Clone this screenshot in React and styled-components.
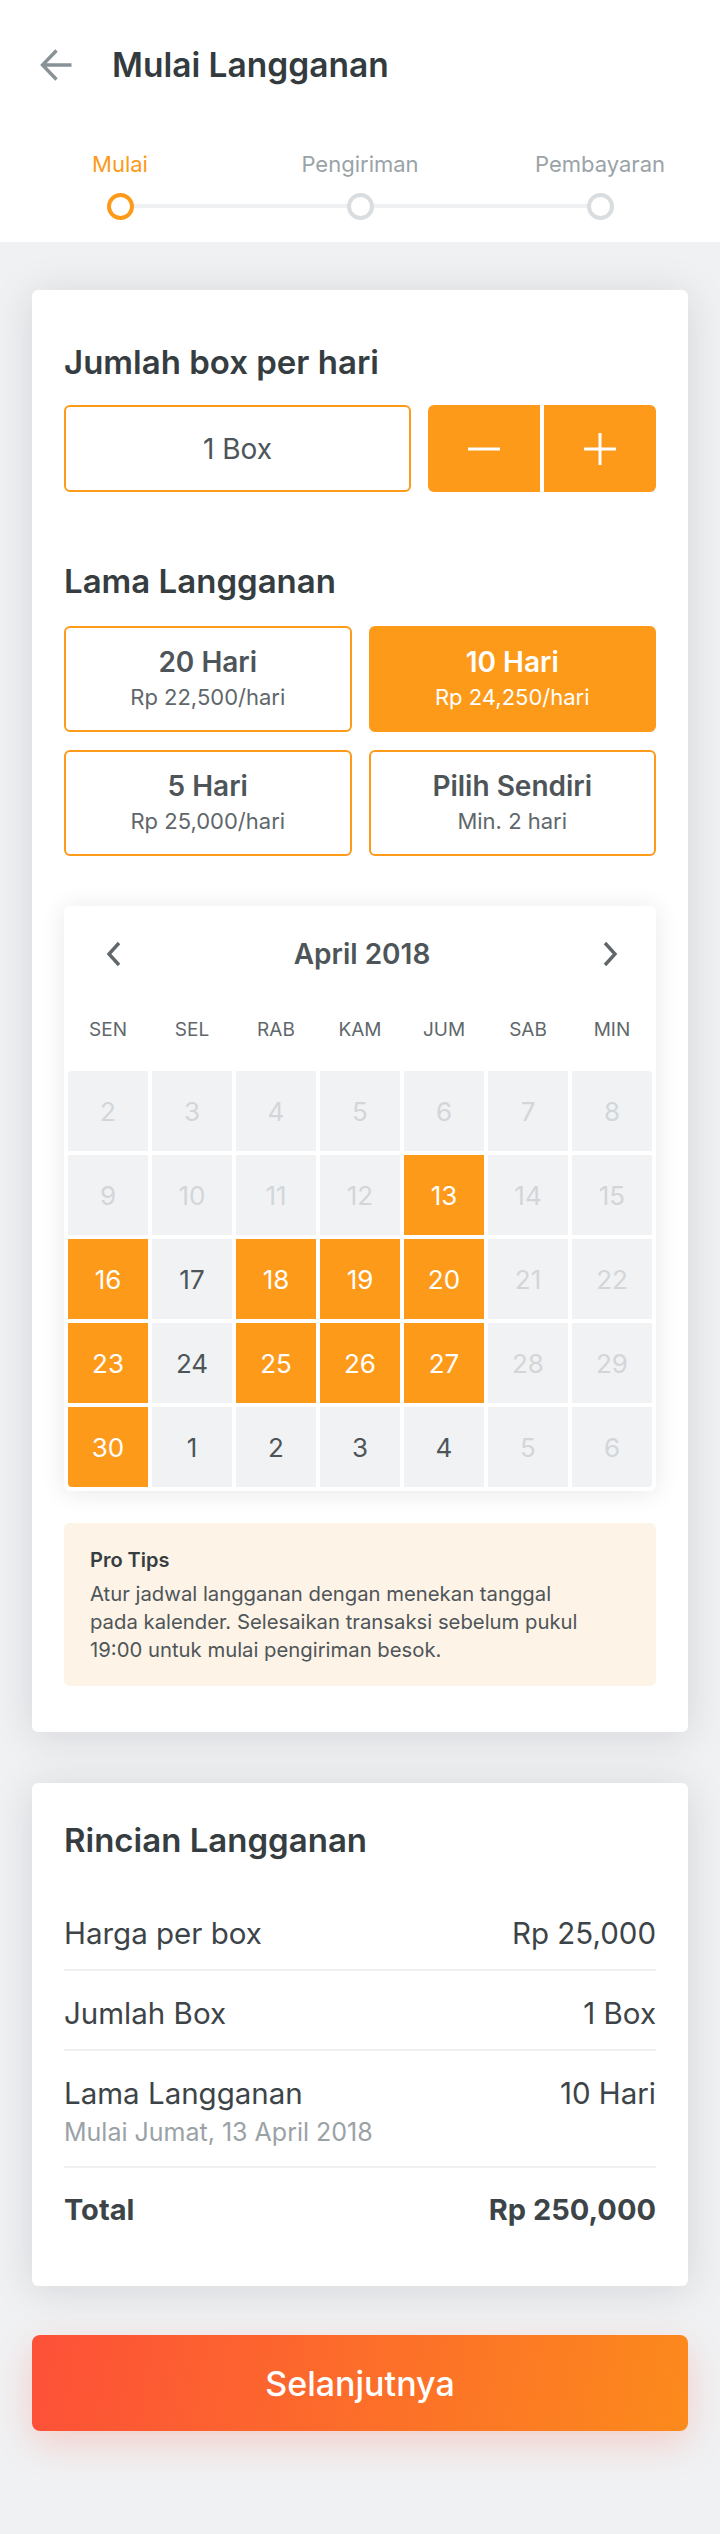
import React from 'react'
import styled, { createGlobalStyle } from 'styled-components'

const ORANGE = '#fd9a1a'

const GlobalStyle = createGlobalStyle`
    body {
        margin: 0;
        background: #f0f1f3;
        font-family: Inter, "Noto Sans", sans-serif;
    }
`

const Page = styled.div`
    width: 720px;
    min-height: 2534px;
    background: #f0f1f3;
`

const Header = styled.header`
    background: #fff;
`

const TopBar = styled.div`
    height: 130px;
    display: flex;
    align-items: center;
    gap: 40px;
    padding-left: 40px;
`

const Title = styled.h1`
    margin: 0;
    font-size: 33.5px;
    line-height: 40px;
    font-weight: 600;
    color: #333b3f;
`

const Steps = styled.div`
    display: grid;
    grid-template-columns: repeat(3, 1fr);
    padding: 20px 0 22px;
`

const Step = styled.div`
    display: flex;
    flex-direction: column;
    align-items: center;
    gap: 14px;
`

const StepLabel = styled.span`
    font-size: 22px;
    line-height: 28px;
    color: ${p => (p.$active ? ORANGE : '#9aa3a7')};
`

const DotRow = styled.div`
    width: 100%;
    height: 28px;
    display: flex;
    align-items: center;
`

const Track = styled.div`
    flex: 1;
    height: 4px;
    background: ${p => (p.$hidden ? 'transparent' : '#eef0f2')};
`

const Dot = styled.div`
    width: 27px;
    height: 27px;
    box-sizing: border-box;
    border-radius: 50%;
    background: #fff;
    border: 4px solid ${p => (p.$active ? ORANGE : '#dadddf')};
`

const Main = styled.main`
    padding: 48px 32px 0;
    display: flex;
    flex-direction: column;
`

const Card = styled.section`
    background: #fff;
    border-radius: 6px;
    box-shadow: 0 4px 40px rgba(20, 30, 40, 0.13);
    padding: ${p => p.$pad};
    & + & {
        margin-top: 51px;
    }
`

const SectionTitle = styled.h2`
    margin: ${p => p.$mt || 0}px 0 0;
    font-size: 33px;
    line-height: 40px;
    font-weight: 600;
    color: #363d41;
`

const Stepper = styled.div`
    display: flex;
    gap: 17px;
    margin-top: 23px;
    height: 87px;
`

const QtyBox = styled.div`
    width: 347px;
    box-sizing: border-box;
    border: 2px solid ${ORANGE};
    border-radius: 6px;
    display: flex;
    align-items: center;
    justify-content: center;
    font-size: 28px;
    color: #4d5559;
`

const QtyButtons = styled.div`
    flex: 1;
    display: flex;
    gap: 4px;
`

const QtyButton = styled.button`
    flex: 1;
    border: none;
    padding: 0;
    background: ${ORANGE};
    display: flex;
    align-items: center;
    justify-content: center;
    border-radius: ${p => (p.$side === 'left' ? '6px 0 0 6px' : '0 6px 6px 0')};
`

const OptionGrid = styled.div`
    display: grid;
    grid-template-columns: 1fr 1fr;
    gap: 18px 17px;
    margin-top: 25px;
`

const Option = styled.div`
    height: 106px;
    box-sizing: border-box;
    border: 2px solid ${ORANGE};
    border-radius: 6px;
    background: ${p => (p.$active ? ORANGE : '#fff')};
    display: flex;
    flex-direction: column;
    align-items: center;
    justify-content: center;
    gap: 4px;
`

const OptionTitle = styled.div`
    font-size: 28px;
    line-height: 32px;
    font-weight: 600;
    color: ${p => (p.$active ? '#fff' : '#4d5559')};
`

const OptionSub = styled.div`
    font-size: 22px;
    line-height: 30px;
    color: ${p => (p.$active ? '#fff' : '#5f676b')};
`

const Calendar = styled.div`
    margin-top: 50px;
    background: #fff;
    border-radius: 6px;
    box-shadow: 0 2px 24px rgba(20, 30, 40, 0.1);
    padding: 4px;
`

const CalHeader = styled.div`
    height: 88px;
    display: flex;
    align-items: center;
    justify-content: space-between;
    padding: 0 34px 0 38px;
`

const MonthLabel = styled.div`
    font-size: 28px;
    line-height: 34px;
    font-weight: 600;
    color: #4d5559;
`

const WeekGrid = styled.div`
    display: grid;
    grid-template-columns: repeat(7, 1fr);
    gap: 4px;
`

const DayNames = styled(WeekGrid)`
    height: 62px;
    align-items: center;
`

const DayName = styled.div`
    text-align: center;
    font-size: 19px;
    color: #5f676b;
`

const DayGrid = styled(WeekGrid)`
    margin-top: 11px;
    border-radius: 4px;
    overflow: hidden;
`

const dayBg = { selected: ORANGE, normal: '#f1f2f4', disabled: '#f1f2f4' }
const dayColor = { selected: '#fff', normal: '#4d5559', disabled: '#d3d6d9' }

const Day = styled.div`
    height: 80px;
    display: flex;
    align-items: center;
    justify-content: center;
    font-size: 26px;
    background: ${p => dayBg[p.$kind]};
    color: ${p => dayColor[p.$kind]};
`

const Tips = styled.div`
    margin-top: 32px;
    background: #fdf3e6;
    border-radius: 6px;
    padding: 23px 26px 22px;
`

const TipTitle = styled.div`
    font-size: 20px;
    line-height: 28px;
    font-weight: 600;
    color: #363d41;
`

const TipText = styled.p`
    margin: 6px 0 0;
    font-size: 20.3px;
    line-height: 28px;
    color: #4d5559;
`

const Details = styled.div`
    margin-top: 31px;
`

const DetailRow = styled.div`
    display: flex;
    justify-content: space-between;
    align-items: flex-start;
    padding: 24px 0 18px;
    border-bottom: 2px solid ${p => (p.$last ? 'transparent' : '#eef0f2')};
    font-size: ${p => (p.$bold ? 29 : 29.5)}px;
    line-height: 36px;
    font-weight: ${p => (p.$bold ? 700 : 400)};
    color: #3d4448;
`

const DetailSub = styled.div`
    margin-top: 5px;
    font-size: 25px;
    line-height: 32px;
    font-weight: 400;
    color: #9aa2a6;
`

const NextButton = styled.button`
    margin-top: 49px;
    height: 96px;
    border: none;
    border-radius: 8px;
    background: linear-gradient(100deg, #fd5038 0%, #fc8a1c 100%);
    box-shadow: 0 12px 36px rgba(253, 80, 56, 0.22);
    color: #fff;
    font-family: inherit;
    font-size: 34px;
    font-weight: 500;
`

const BackIcon = () => (
    <svg width="32" height="32" viewBox="0 0 32 32" fill="none" stroke="#899297" strokeWidth="3.4">
        <path d="M2.5 16H31.5M16.5 1.5L2.5 16L16.5 30.5" />
    </svg>
)

const Chevron = ({ dir }) => (
    <svg width="16" height="26" viewBox="0 0 16 26" fill="none" stroke="#5f676b" strokeWidth="3.4">
        <path d={dir === 'left' ? 'M13 2L3 13L13 24' : 'M3 2L13 13L3 24'} />
    </svg>
)

const steps = ['Mulai', 'Pengiriman', 'Pembayaran']

const options = [
    { title: '20 Hari', sub: 'Rp 22,500/hari' },
    { title: '10 Hari', sub: 'Rp 24,250/hari', active: true },
    { title: '5 Hari', sub: 'Rp 25,000/hari' },
    { title: 'Pilih Sendiri', sub: 'Min. 2 hari' },
]

const dayNames = ['SEN', 'SEL', 'RAB', 'KAM', 'JUM', 'SAB', 'MIN']

const S = 'selected', N = 'normal', D = 'disabled'
const days = [
    [2, D], [3, D], [4, D], [5, D], [6, D], [7, D], [8, D],
    [9, D], [10, D], [11, D], [12, D], [13, S], [14, D], [15, D],
    [16, S], [17, N], [18, S], [19, S], [20, S], [21, D], [22, D],
    [23, S], [24, N], [25, S], [26, S], [27, S], [28, D], [29, D],
    [30, S], [1, N], [2, N], [3, N], [4, N], [5, D], [6, D],
]

export default function App() {
    return (
        <Page>
            <GlobalStyle />
            <Header>
                <TopBar>
                    <BackIcon />
                    <Title>Mulai Langganan</Title>
                </TopBar>
                <Steps>
                    {steps.map((s, i) => (
                        <Step key={s}>
                            <StepLabel $active={i === 0}>{s}</StepLabel>
                            <DotRow>
                                <Track $hidden={i === 0} />
                                <Dot $active={i === 0} />
                                <Track $hidden={i === steps.length - 1} />
                            </DotRow>
                        </Step>
                    ))}
                </Steps>
            </Header>

            <Main>
                <Card $pad="52px 32px 46px">
                    <SectionTitle>Jumlah box per hari</SectionTitle>
                    <Stepper>
                        <QtyBox>1 Box</QtyBox>
                        <QtyButtons>
                            <QtyButton $side="left">
                                <svg width="32" height="32" viewBox="0 0 32 32" stroke="#fff" strokeWidth="3">
                                    <path d="M0 16H32" />
                                </svg>
                            </QtyButton>
                            <QtyButton $side="right">
                                <svg width="32" height="32" viewBox="0 0 32 32" stroke="#fff" strokeWidth="3">
                                    <path d="M0 16H32M16 0V32" />
                                </svg>
                            </QtyButton>
                        </QtyButtons>
                    </Stepper>

                    <SectionTitle $mt={69}>Lama Langganan</SectionTitle>
                    <OptionGrid>
                        {options.map(o => (
                            <Option key={o.title} $active={o.active}>
                                <OptionTitle $active={o.active}>{o.title}</OptionTitle>
                                <OptionSub $active={o.active}>{o.sub}</OptionSub>
                            </Option>
                        ))}
                    </OptionGrid>

                    <Calendar>
                        <CalHeader>
                            <Chevron dir="left" />
                            <MonthLabel>April 2018</MonthLabel>
                            <Chevron dir="right" />
                        </CalHeader>
                        <DayNames>
                            {dayNames.map(d => <DayName key={d}>{d}</DayName>)}
                        </DayNames>
                        <DayGrid>
                            {days.map(([n, kind], i) => (
                                <Day key={i} $kind={kind}>{n}</Day>
                            ))}
                        </DayGrid>
                    </Calendar>

                    <Tips>
                        <TipTitle>Pro Tips</TipTitle>
                        <TipText>
                            Atur jadwal langganan dengan menekan tanggal<br />
                            pada kalender. Selesaikan transaksi sebelum pukul<br />
                            19:00 untuk mulai pengiriman besok.
                        </TipText>
                    </Tips>
                </Card>

                <Card $pad="37px 32px 38px">
                    <SectionTitle>Rincian Langganan</SectionTitle>
                    <Details>
                        <DetailRow>
                            <span>Harga per box</span>
                            <span>Rp 25,000</span>
                        </DetailRow>
                        <DetailRow>
                            <span>Jumlah Box</span>
                            <span>1 Box</span>
                        </DetailRow>
                        <DetailRow>
                            <div>
                                Lama Langganan
                                <DetailSub>Mulai Jumat, 13 April 2018</DetailSub>
                            </div>
                            <span>10 Hari</span>
                        </DetailRow>
                        <DetailRow $last $bold>
                            <span>Total</span>
                            <span>Rp 250,000</span>
                        </DetailRow>
                    </Details>
                </Card>

                <NextButton>Selanjutnya</NextButton>
            </Main>
        </Page>
    )
}
